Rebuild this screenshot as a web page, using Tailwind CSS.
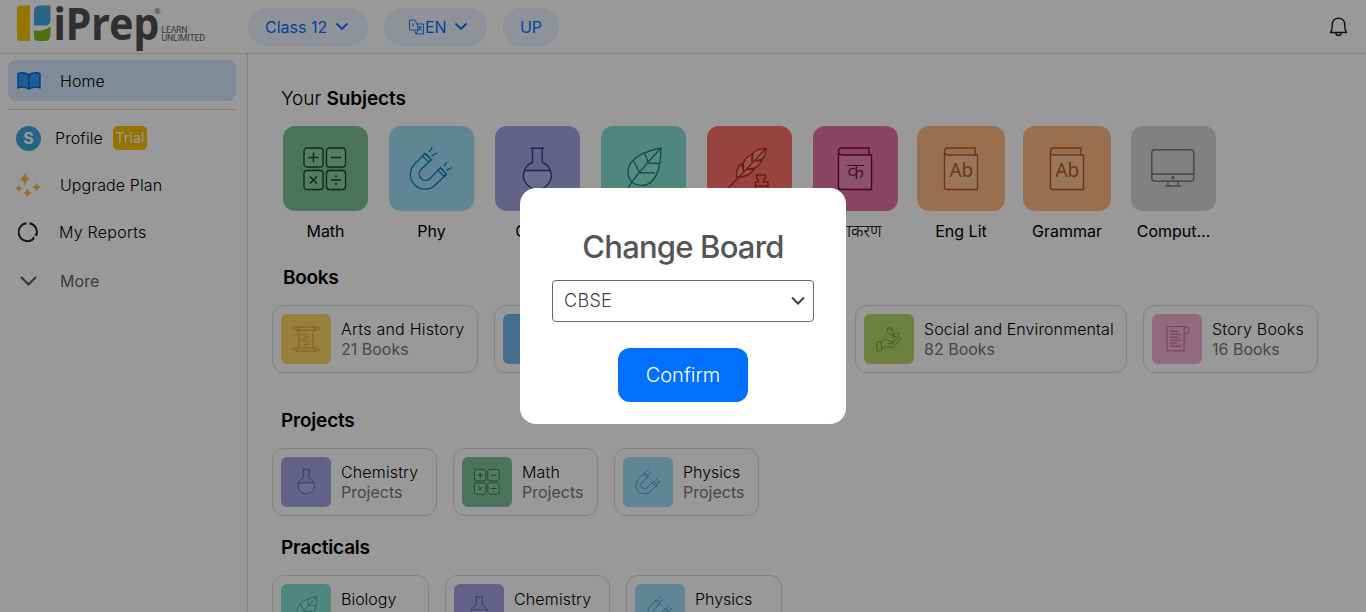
<!DOCTYPE html>
<html lang="en">
<head>
<meta charset="utf-8">
<title>iPrep</title>
<script src="https://cdn.jsdelivr.net/npm/@tailwindcss/browser@4"></script>
</head>
<body class="h-[612px] w-[1366px] overflow-hidden bg-white font-['Inter','Noto_Sans',sans-serif] text-black">
<svg class="hidden">
  <symbol id="math" viewBox="0 0 44 44"><g fill="#fff" fill-opacity=".18" stroke="currentColor" stroke-width="1.3"><rect x="1" y="1" width="19" height="19" rx="3"/><rect x="23.500" y="1" width="19" height="19" rx="3"/><rect x="1" y="23.500" width="19" height="19" rx="3"/><rect x="23.500" y="23.500" width="19" height="19" rx="3"/></g><path d="M5.500 10.500h10M10.500 5.500v10M28 10.500h10M7 29.500l7 7M14 29.500l-7 7M28 33h10" fill="none" stroke="currentColor" stroke-width="1.5"/><circle cx="33" cy="29.300" r="1.100" fill="currentColor"/><circle cx="33" cy="36.900" r="1.100" fill="currentColor"/></symbol>
  <symbol id="magnet" viewBox="0 0 44 44" fill="none" stroke="currentColor" stroke-width="1.3"><path d="M16 6.500L5.500 17.300A14.600 14.600 0 0 0 26.500 37.800L37.500 27.300L31.500 20.800L20.500 32A6.400 6.400 0 0 1 11.300 23.300L22.300 12.800Z"/><path d="M13.500 9l6.300 6.200L22.300 12.800L16 6.500ZM29 23.300l6.200 6.200L37.500 27.300L31.500 20.800Z" fill="#fff" fill-opacity=".15"/><path d="M20 5l3.200-4.500M22.500 9l5.500-3M35 19.500l2.700-4.300M37.500 23.300l5.500-2.800"/></symbol>
  <symbol id="flask" viewBox="0 0 44 44" fill="none" stroke="currentColor" stroke-width="1.4"><path d="M9 23.500h26.500A14 14 0 1 1 9 23.500" fill="#fff" fill-opacity=".18" stroke="none"/><path d="M15.500 1.200h13.500M17.500 1.200v14.200A13.800 13.800 0 1 0 27.200 15.400V1.200M9 23.500h26.500"/></symbol>
  <symbol id="leaf" viewBox="0 0 44 44" fill="none" stroke="currentColor" stroke-width="1.4"><path d="M40 1C25 4 7 11 7 25C7 32 11 38 21 38.500C35 38.500 40 20 40 1Z" fill="#fff" fill-opacity=".15"/><path d="M40 1C30 12 14 28 6 43M12.500 13.500L18.500 25.500M24 7L27.500 16M27.500 16L38.500 16.500M18.500 25.500L34 26"/></symbol>
  <symbol id="quill" viewBox="0 0 44 44" fill="none" stroke="currentColor" stroke-width="1.3"><path d="M11 31L9.500 29Q9 22 14.500 16.500L16.500 24L16.500 16Q18 11 25 7L25 15L26 6Q30 1.500 39 1.500Q39.500 7 36 11.500L28 14L35 13.500Q32 19 28 21L20 22.500L27 22.500Q22 29.500 12 30Z" fill="#fff" fill-opacity=".2"/><path d="M38.500 2L11 31L0 42.500"/><path d="M29.500 28h9v3l-2 2v2h4.500v8H28.500v-8h3v-2l-2-2zM28.500 39h12"/></symbol>
  <symbol id="book" viewBox="0 0 44 44" fill="none" stroke="currentColor" stroke-width="1.4"><path d="M5.500 7.500V40q0 2.500 2.500 2.500h30.500V8H9" fill="#fff" fill-opacity=".16"/><path d="M5.500 8V4.500Q5.500 1 9 1H36V8M5.500 5Q6 8 9 8"/></symbol>
  <symbol id="monitor" viewBox="0 0 44 44" fill="none" stroke="currentColor" stroke-width="1.4"><rect x=".8" y="2.800" width="42" height="31.500" rx="3"/><path d="M1 27h41.500M17 34.500v4.500M27 34.500v4.500M14 39h16.500"/><circle cx="22" cy="30.700" r=".9" fill="currentColor"/></symbol>
  <symbol id="scroll" viewBox="0 0 44 44" fill="none" stroke="currentColor" stroke-width="1.300"><rect x="4" y="3" width="36" height="5" rx="1"/><rect x="4" y="36" width="36" height="5" rx="1"/><path d="M9 1v9M35 1v9M9 34v9M35 34v9M1 3.500v4M43 3.500v4M1 36.500v4M43 36.500v4M11 8v28M33 8v28M15 15h8M19 19h8M16 23h8M21 27h7M18 31h8"/></symbol>
  <symbol id="plant" viewBox="0 0 44 44" fill="none" stroke="currentColor" stroke-width="1.4"><path d="M1 28l7-2 2 14-8 3zM9 27c5-5 9-5 12-2l8 1q2 3-2 4h-7M28 27l10-7q5-1 4 3l-14 13-12-1-6 4M29 22V15M29 15C20 15 18 9 19 5c7-1 11 3 10 10M29 17c2-6 6-7 10-5c0 5-5 7-10 5M28 8c0-4-3-7-7-6l-1 3"/></symbol>
  <symbol id="story" viewBox="0 0 44 44" fill="none" stroke="currentColor" stroke-width="1.6"><path d="M5 42V5q0-4 4-4h28q5 0 5 5v6h-8M34 5v37H5M34 5q0-4 3-4M10 9h14M10 14h19M10 19h15M10 24h19M10 29h11M10 34h19"/></symbol>
</svg>

<header class="flex h-[54px] items-center border-b border-[#dadada]">
  <svg class="ml-4 mr-[42px] shrink-0" width="190" height="54" viewBox="16 0 190 54">
    <path d="M20.500 5.500H30V41H20.500Q17 41 17 37.500V9Q17 5.500 20.500 5.500Z" fill="#f8c400"/>
    <path d="M40 5.500H50.500V20Q50.500 25 45.500 25.500H34V11.500Q34 5.500 40 5.500Z" fill="#42a5dc"/>
    <path d="M34 30.500Q45 31.500 50.500 26.500V35Q50.500 41 44.500 41H38Q34 41 34 37Z" fill="#7fbb20"/>
    <text x="53.500" y="40.300" font-family="Noto Sans" font-weight="700" font-size="45" textLength="106" lengthAdjust="spacingAndGlyphs" fill="#505050">iPrep</text>
    <text x="154" y="13.500" font-family="Open Sans" font-size="8" fill="#505050">®</text>
    <g font-family="Roboto" font-size="8.800" fill="#606060"><text x="161.500" y="33" textLength="26">LEARN</text><text x="161.500" y="41" textLength="43.500">UNLIMITED</text></g>
  </svg>
  <div class="flex gap-4 text-base text-[#0070ff]">
    <div class="flex h-[38px] w-[120px] items-center rounded-full border border-[#e0efff] bg-[#eef6ff] pl-4"><span>Class 12</span><svg class="ml-2" width="14" height="9" viewBox="0 0 14 9" fill="none" stroke="currentColor" stroke-width="1.800"><path d="M1.500 1.500L7 7L12.500 1.500"/></svg></div>
    <div class="flex h-[38px] w-[103px] items-center rounded-full border border-[#e0efff] bg-[#eef6ff] pl-6">
      <svg width="15" height="16" viewBox="0 0 15 16" fill="none" stroke="currentColor" stroke-width=".9"><path d="M.5 1h5.500l2 4 1.500 6H.5zM8 5h6.500v10H7l-1.500-4M9.500 11L7 15M9 8h4M11 7v1Q11 10 9 11.500M10 9l3 3"/><path d="M2.800 7.500L4 4.500 5.200 7.500" stroke-width=".6"/></svg>
      <span class="ml-px">EN</span><svg class="ml-[7px]" width="14" height="9" viewBox="0 0 14 9" fill="none" stroke="currentColor" stroke-width="1.800"><path d="M1.500 1.500L7 7L12.500 1.500"/></svg></div>
    <div class="flex h-[38px] w-14 items-center justify-center rounded-full border border-[#e0efff] bg-[#eef6ff]">UP</div>
  </div>
  <svg class="ml-auto mr-[18px]" width="19" height="20" viewBox="0 0 19 20" fill="none" stroke="#222" stroke-width="1.500"><path d="M1.500 15.500C3.500 13 3.300 11 3.300 7.500C3.300 3.500 6 1.200 9.500 1.200S15.700 3.500 15.700 7.500C15.700 11 15.500 13 17.500 15.500Z" stroke-linejoin="round"/><path d="M7 16q0 2.500 2.500 2.500T12 16"/></svg>
</header>

<div class="flex h-[558px]">
  <aside class="w-[248px] shrink-0 border-r border-[#dadada] pl-2 pr-[11px] pt-1.5 text-base font-light tracking-[0.1px]">
    <div class="flex h-[41px] items-center rounded-lg bg-[#d4e8ff] pl-[9px]">
      <svg width="24" height="18" viewBox="0 0 24 18"><path d="M12 2.500Q6-.5 1 1.500V16Q7 14 12 17Q17 14 23 16V1.500Q18-.5 12 2.500Z" fill="#329bff" stroke="#0060c8" stroke-width="1.300"/><path d="M12 2.500V17" stroke="#0060c8" stroke-width="1.300"/></svg>
      <span class="ml-[19px]">Home</span>
    </div>
    <div class="mt-2 h-px bg-[#d4d4d4]"></div>
    <div class="mt-1 flex h-[47px] items-center pl-2">
      <span class="mt-px flex size-[25px] items-center justify-center rounded-full bg-[#42a5dc] text-base font-bold text-white">S</span>
      <span class="ml-3.5">Profile</span>
      <span class="ml-[10px] flex h-6 w-[34px] items-center justify-center rounded-[5px] bg-[#f8c000] text-sm font-normal text-white">Trial</span>
    </div>
    <div class="flex h-[47px] items-center pl-2">
      <svg width="25" height="24" viewBox="0 0 25 24" fill="#f5b82e"><path d="M9 0Q9.500 5 14 6Q9.500 7 9 12Q8.500 7 4 6Q8.500 5 9 0ZM20.500 10Q21 13.500 24.500 14Q21 14.500 20.500 18Q20 14.500 16.500 14Q20 13.500 20.500 10ZM11.500 16Q12 19.500 15.500 20Q12 20.500 11.500 24Q11 20.500 7.500 20Q11 19.500 11.500 16ZM3 12.500Q3.300 15 6 15.500Q3.300 16 3 18.500Q2.700 16 0 15.500Q2.700 15 3 12.500Z" stroke="#f5b82e" stroke-width=".5"/></svg>
      <span class="ml-[19px]">Upgrade Plan</span>
    </div>
    <div class="flex h-[47px] items-center pl-2.5">
      <svg width="20" height="20" viewBox="0 0 20 20" fill="none" stroke="#222" stroke-width="2"><path d="M11.500 1.200A9 9 0 0 1 18.400 13L16.800 12.300M16 16.500A9 9 0 1 1 8.500 1.200M16 16.500L14.800 15.200"/></svg>
      <span class="ml-[21px] tracking-[0.25px]">My Reports</span>
    </div>
    <div class="mt-[2px] flex h-[47px] items-center pl-3">
      <svg width="17" height="10" viewBox="0 0 17 10" fill="none" stroke="#555" stroke-width="2"><path d="M1 1L8.500 8.500L16 1"/></svg>
      <span class="ml-[23px] font-normal text-[#666]">More</span>
    </div>
  </aside>

  <main class="min-w-0 flex-1 overflow-hidden pl-6">
    <h2 class="ml-[9px] mt-[31px] h-7 text-[19px] leading-7 tracking-[-0.08px]"><span class="font-light">Your</span> <b class="font-semibold">Subjects</b></h2>
    <div class="ml-[11px] mt-[13px] flex h-[120px] gap-[21px] text-base">
      <div class="flex w-[85px] shrink-0 flex-col items-center gap-2 whitespace-nowrap"><div class="flex h-[85px] w-full items-center justify-center rounded-xl bg-[#7fc19b] pr-[2px] text-[#0e4b29]"><svg class="size-11"><use href="#math"/></svg></div>Math</div>
      <div class="flex w-[85px] shrink-0 flex-col items-center gap-2 whitespace-nowrap"><div class="flex h-[85px] w-full items-center justify-center rounded-xl bg-[#a0def8] pr-[2px] text-[#0083c0]"><svg class="size-11"><use href="#magnet"/></svg></div>Phy</div>
      <div class="flex w-[85px] shrink-0 flex-col items-center gap-2 whitespace-nowrap"><div class="flex h-[85px] w-full items-center justify-center rounded-xl bg-[#a7a3e4] pr-[2px] text-[#3d3590]"><svg class="size-11"><use href="#flask"/></svg></div>Chem</div>
      <div class="flex w-[85px] shrink-0 flex-col items-center gap-2 whitespace-nowrap"><div class="flex h-[85px] w-full items-center justify-center rounded-xl bg-[#84e1d2] pr-[2px] text-[#109078]"><svg class="size-11"><use href="#leaf"/></svg></div>Bio</div>
      <div class="flex w-[85px] shrink-0 flex-col items-center gap-2 whitespace-nowrap"><div class="flex h-[85px] w-full items-center justify-center rounded-xl bg-[#fd7069] pr-[2px] text-[#b42824]"><svg class="size-11"><use href="#quill"/></svg></div>Eng</div>
      <div class="flex w-[85px] shrink-0 flex-col items-center gap-2 whitespace-nowrap"><div class="flex h-[85px] w-full items-center justify-center rounded-xl bg-[#e375a3] pr-[2px] text-[#85003f]"><svg class="size-11" viewBox="0 0 44 44"><use href="#book"/><text x="22.500" y="32" text-anchor="middle" font-size="23" font-weight="300" fill="currentColor">क</text></svg></div><span class="pl-[3px] text-[17px] font-light leading-6">व्याकरण</span></div>
      <div class="-ml-0.5 flex w-[88px] shrink-0 flex-col items-center gap-2 whitespace-nowrap"><div class="flex h-[85px] w-full items-center justify-center rounded-xl bg-[#ffb980] text-[#bb5a20]"><svg class="size-11" viewBox="0 0 44 44"><use href="#book"/><text x="22.300" y="30" text-anchor="middle" font-family="Noto Sans" font-size="19" fill="currentColor">Ab</text></svg></div>Eng Lit</div>
      <div class="-ml-[3px] flex w-[88px] shrink-0 flex-col items-center gap-2 whitespace-nowrap"><div class="flex h-[85px] w-full items-center justify-center rounded-xl bg-[#ffb980] text-[#bb5a20]"><svg class="size-11" viewBox="0 0 44 44"><use href="#book"/><text x="22.300" y="30" text-anchor="middle" font-family="Noto Sans" font-size="19" fill="currentColor">Ab</text></svg></div>Grammar</div>
      <div class="-ml-px flex w-[85px] shrink-0 flex-col items-center gap-2 whitespace-nowrap"><div class="flex h-[85px] w-full items-center justify-center rounded-xl bg-[#d7d7d7] pr-[2px] text-[#777]"><svg class="size-11"><use href="#monitor"/></svg></div>Comput...</div>
    </div>

    <h2 class="ml-[11px] mt-[18px] h-7 text-[19px] font-semibold leading-7 tracking-[-0.3px]">Books</h2>
    <div class="mt-[13px] flex gap-4 text-base leading-5">
      <div class="flex h-[68px] w-[206px] shrink-0 items-center rounded-xl border border-[#dadada] pl-2"><div class="mr-2.5 flex size-[50px] items-center justify-center rounded-md bg-[#fdd569] text-[#d99a10]"><svg class="size-7"><use href="#scroll"/></svg></div><div class="whitespace-nowrap"><p class="font-light tracking-[0.25px]">Arts and History</p><p class="text-[#777]">21 Books</p></div></div>
      <div class="flex h-[68px] w-[345px] shrink-0 items-center rounded-xl border border-[#dadada] pl-2"><div class="size-[50px] rounded-md bg-[#76b9ee]"></div></div>
      <div class="flex h-[68px] w-[272px] shrink-0 items-center rounded-xl border border-[#dadada] pl-2"><div class="mr-2.5 flex size-[50px] items-center justify-center rounded-md bg-[#b6d769] text-[#5d9420]"><svg class="size-[26px]"><use href="#plant"/></svg></div><div class="whitespace-nowrap"><p class="font-light tracking-[0.1px]">Social and Environmental</p><p class="text-[#777]">82 Books</p></div></div>
      <div class="flex h-[68px] w-[175px] shrink-0 items-center rounded-xl border border-[#dadada] pl-2"><div class="mr-2.5 flex size-[50px] items-center justify-center rounded-md bg-[#f3b1d2] text-[#c45c8c]"><svg class="size-[26px]"><use href="#story"/></svg></div><div class="whitespace-nowrap"><p class="font-light tracking-[0.2px]">Story Books</p><p class="text-[#777]">16 Books</p></div></div>
    </div>

    <h2 class="ml-[9px] mt-[34px] h-7 text-[19px] font-semibold leading-7 tracking-[-0.2px]">Projects</h2>
    <div class="mt-[13px] flex gap-4 text-base leading-5">
      <div class="flex h-[68px] w-[165px] items-center rounded-xl border border-[#dadada] pl-2"><div class="mr-2.5 flex size-[50px] items-center justify-center rounded-md bg-[#a7a3e4] text-[#5a529f]"><svg class="size-[26px]"><use href="#flask"/></svg></div><div><p class="font-light tracking-[0.15px]">Chemistry</p><p class="text-[#777]">Projects</p></div></div>
      <div class="flex h-[68px] w-[145px] items-center rounded-xl border border-[#dadada] pl-2"><div class="mr-2.5 flex size-[50px] items-center justify-center rounded-md bg-[#7fc19b] text-[#22633e]"><svg class="size-[26px]"><use href="#math"/></svg></div><div><p class="font-light tracking-[0.2px]">Math</p><p class="text-[#777]">Projects</p></div></div>
      <div class="flex h-[68px] w-[145px] items-center rounded-xl border border-[#dadada] pl-2"><div class="mr-2.5 flex size-[50px] items-center justify-center rounded-md bg-[#a0def8] text-[#268fbe]"><svg class="size-[26px]"><use href="#magnet"/></svg></div><div><p class="font-light">Physics</p><p class="text-[#777]">Projects</p></div></div>
    </div>

    <h2 class="ml-[9px] mt-[18px] h-7 text-[19px] font-semibold leading-7 tracking-[-0.2px]">Practicals</h2>
    <div class="mt-[13px] flex gap-4 text-base leading-5">
      <div class="flex h-[68px] w-[157px] items-center rounded-xl border border-[#dadada] pl-2"><div class="mr-2.5 flex size-[50px] items-center justify-center rounded-md bg-[#84e1d2] text-[#289d88]"><svg class="size-[26px]"><use href="#leaf"/></svg></div><div><p class="font-light">Biology</p><p class="text-[#777]">Practicals</p></div></div>
      <div class="flex h-[68px] w-[165px] items-center rounded-xl border border-[#dadada] pl-2"><div class="mr-2.5 flex size-[50px] items-center justify-center rounded-md bg-[#a7a3e4] text-[#5a529f]"><svg class="size-[26px]"><use href="#flask"/></svg></div><div><p class="font-light tracking-[0.15px]">Chemistry</p><p class="text-[#777]">Practicals</p></div></div>
      <div class="flex h-[68px] w-[156px] items-center rounded-xl border border-[#dadada] pl-2"><div class="mr-2.5 flex size-[50px] items-center justify-center rounded-md bg-[#a0def8] text-[#268fbe]"><svg class="size-[26px]"><use href="#magnet"/></svg></div><div><p class="font-light">Physics</p><p class="text-[#777]">Practicals</p></div></div>
    </div>
  </main>
</div>

<div class="fixed inset-0 flex items-center justify-center bg-black/40">
  <div class="flex h-[236px] w-[326px] flex-col items-center rounded-2xl bg-white pt-[38px]">
    <h1 class="h-10 whitespace-nowrap text-[31px] font-medium leading-[41px] tracking-[-0.8px] text-[#555]">Change Board</h1>
    <div class="mt-3.5 flex h-[42px] w-[262px] items-center justify-between rounded border border-[#666] pl-[11px] pr-2 text-lg font-light tracking-[0.3px] text-[#444]"><span>CBSE</span><svg width="14" height="10" viewBox="0 0 14 10" fill="none" stroke="#344054" stroke-width="2"><path d="M1 1.500L7 7.500L13 1.500"/></svg></div>
    <button class="mt-[26px] h-[54px] w-[130px] rounded-xl bg-[#0070ff] text-xl font-light text-white">Confirm</button>
  </div>
</div>
</body>
</html>
